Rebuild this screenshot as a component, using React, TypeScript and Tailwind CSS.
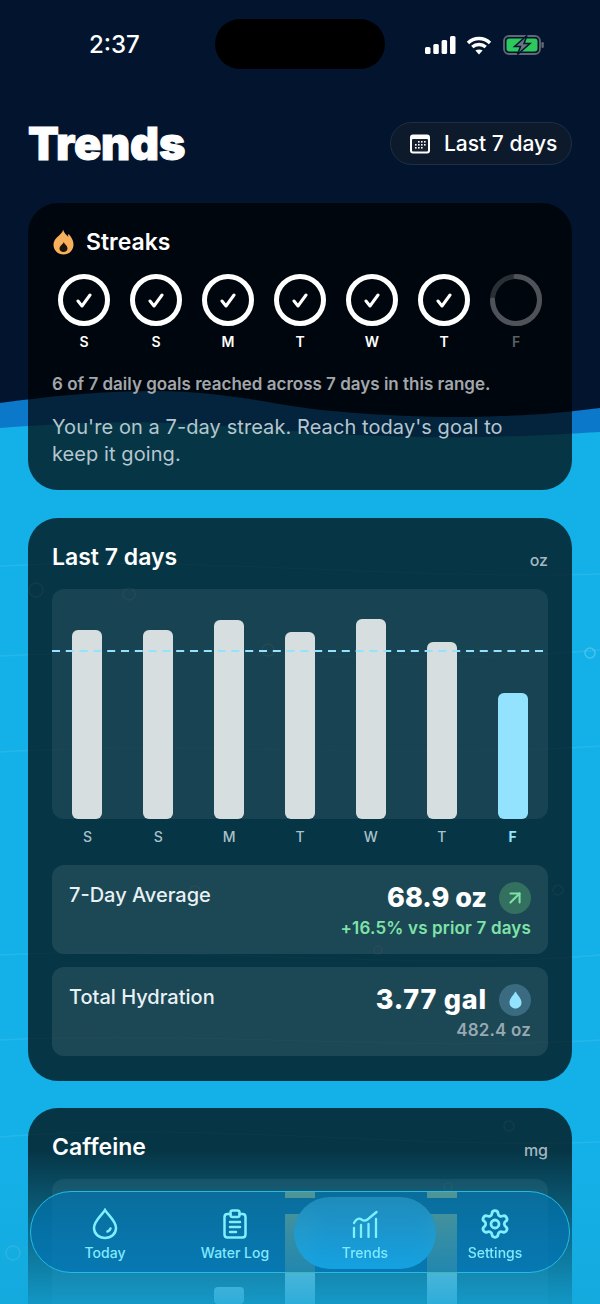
import { Settings, ArrowUpRight } from "lucide-react";

const days = ["S", "S", "M", "T", "W", "T", "F"];
const barHeights = [189, 189, 199, 187, 200, 177, 126];

const Background = () => (
  <svg
    className="absolute inset-0 h-full w-full"
    viewBox="0 0 600 1304"
    preserveAspectRatio="none"
  >
    <rect width="600" height="1304" fill="#03152e" />
    <path
      d="M0 403 C40 398 80 392 150 391 C230 390 280 408 344 412 C400 417 460 418 500 416 C540 415 570 412 600 408 V1304 H0 Z"
      fill="#0b78c9"
    />
    <path
      d="M0 428 C60 424 120 420 190 424 C260 428 340 436 420 437 C490 438 550 435 600 432 V1304 H0 Z"
      fill="#14b1e8"
    />
    <g fill="none" stroke="#ffffff" strokeOpacity="0.08" strokeWidth="1.5">
      <path d="M0 566 C200 556 400 580 600 574" />
      <path d="M0 656 C200 646 400 668 600 650" />
      <path d="M0 752 C200 740 400 760 600 746" />
      <path d="M0 955 C200 945 400 972 600 955" />
      <path d="M0 1040 C200 1030 400 1052 600 1040" />
      <path d="M0 1137 C200 1120 400 1150 600 1142" />
    </g>
    <g fill="none" stroke="#ffffff" strokeOpacity="0.22" strokeWidth="1.5">
      <circle cx="36" cy="590" r="7" />
      <circle cx="129" cy="594" r="6" />
      <circle cx="268" cy="650" r="6" />
      <circle cx="590" cy="653" r="5" />
      <circle cx="195" cy="891" r="5" />
      <circle cx="558" cy="890" r="5" />
      <circle cx="378" cy="950" r="4" />
      <circle cx="509" cy="1126" r="5" />
      <circle cx="448" cy="1187" r="4" />
      <circle cx="13" cy="1253" r="7" />
    </g>
  </svg>
);

const StatusBar = () => (
  <div className="relative flex h-[122px] items-start justify-between text-white">
    <span className="mt-[30px] ml-[89px] text-[24px] leading-[30px] font-medium">2:37</span>
    <div className="absolute top-[19px] left-[215px] h-[50px] w-[170px] rounded-full bg-black" />
    <div className="mt-[35px] mr-[56px] flex items-center gap-[10px]">
      <svg width="31" height="18" viewBox="0 0 31 18" fill="#ffffff">
        <rect x="0" y="11" width="5.5" height="7" rx="1.5" />
        <rect x="8.3" y="8" width="5.5" height="10" rx="1.5" />
        <rect x="16.6" y="4" width="5.5" height="14" rx="1.5" />
        <rect x="25" y="0" width="5.5" height="18" rx="1.5" />
      </svg>
      <svg width="26" height="19" viewBox="0 0 26 19" fill="none" stroke="#ffffff" strokeWidth="3.4">
        <path d="M2 7 C8 1 18 1 24 7" />
        <path d="M6.3 11 C10 7.6 16 7.6 19.7 11" />
        <path d="M13 18.4 L9.4 14.6 C11.4 13 14.6 13 16.6 14.6 Z" fill="#ffffff" stroke="none" />
      </svg>
      <svg className="ml-[1px]" width="41" height="20" viewBox="0 0 41 20">
        <rect x="1" y="1" width="36" height="18" rx="5" fill="none" stroke="#5f6872" strokeWidth="1.8" />
        <rect x="3.5" y="3.5" width="31" height="13" rx="3" fill="#2ec95c" />
        <rect x="38.4" y="7" width="2.4" height="6" rx="1.2" fill="#5f6872" />
        <path d="M24 0.5 L11.5 11.5 H17.5 L14.5 19.5 L27 8.5 H21 Z" fill="#6b7580" stroke="#03152e" strokeWidth="1.5" />
      </svg>
    </div>
  </div>
);

const Header = () => (
  <div className="mb-[38px] flex h-[43px] items-center justify-between px-[28px]">
    <h1 className="text-[45px] leading-none font-black tracking-[-0.005em] text-white [-webkit-text-stroke:1px_#ffffff]">
      Trends
    </h1>
    <div className="flex h-[43px] w-[182px] items-center gap-[14px] rounded-full border border-[#1d2f47] bg-[#0d1a2b] pl-[19px] text-white">
      <svg width="20" height="20" viewBox="0 0 20 20">
        <rect width="20" height="19" y="0.5" rx="3" fill="#ffffff" />
        <rect x="2" y="5" width="16" height="12.5" rx="1" fill="#17202e" />
        <g fill="#ffffff">
          <rect x="8" y="7" width="1.6" height="1.6" />
          <rect x="11" y="7" width="1.6" height="1.6" />
          <rect x="14" y="7" width="1.6" height="1.6" />
          <rect x="5" y="10" width="1.6" height="1.6" />
          <rect x="8" y="10" width="1.6" height="1.6" />
          <rect x="11" y="10" width="1.6" height="1.6" />
          <rect x="14" y="10" width="1.6" height="1.6" />
          <rect x="5" y="13" width="1.6" height="1.6" />
          <rect x="8" y="13" width="1.6" height="1.6" />
          <rect x="11" y="13" width="1.6" height="1.6" />
        </g>
      </svg>
      <span className="text-[21px] leading-none font-medium">Last 7 days</span>
    </div>
  </div>
);

const Flame = () => (
  <svg width="21" height="26" viewBox="0 0 21 26">
    <path
      d="M10 0.5 C11 4 13 5.5 15.5 8 C14.8 6.5 15 5.5 15.5 5 C18.5 8 20.5 11.5 20.5 15.5 C20.5 21.5 16 25.5 10.5 25.5 C5 25.5 0.5 21.5 0.5 15.8 C0.5 10 6 7 7.5 5 C8.8 3.5 10 2.5 10 0.5 Z"
      fill="#f7b15c"
    />
    <path
      d="M10.8 13 C11.5 15.5 14.5 16.5 14.5 19.5 C14.5 21.6 12.8 23 10.5 23 C8.2 23 6.5 21.6 6.5 19.7 C6.5 16.8 9.8 15.8 10.8 13 Z"
      fill="#1c1408"
    />
  </svg>
);

const StreakDay = ({ label, done }: { label: string; done: boolean }) => (
  <div className="flex w-[52px] flex-col items-center gap-[7px]">
    {done ? (
      <div className="flex h-[52px] w-[52px] items-center justify-center rounded-full border-[5px] border-white">
        <svg width="16" height="15" viewBox="0 0 16 15" fill="none" stroke="#ffffff" strokeWidth="3" strokeLinecap="round" strokeLinejoin="round">
          <path d="M2 8 L6 13 L14 2" />
        </svg>
      </div>
    ) : (
      <svg width="52" height="52" viewBox="0 0 52 52" fill="none" strokeWidth="5">
        <circle cx="26" cy="26" r="23.5" stroke="#2a2e35" />
        <path d="M26 2.5 A23.5 23.5 0 1 1 2.5 26" stroke="#4f5359" strokeLinecap="round" />
      </svg>
    )}
    <span className={`text-[14px] leading-[17px] font-semibold ${done ? "text-white" : "text-[#5c6064]"}`}>
      {label}
    </span>
  </div>
);

const StreaksCard = () => (
  <section className="rounded-[30px] bg-black/70 px-[24px] pt-[24px] pb-[22px]">
    <div className="flex h-[30px] items-center gap-[12px] pl-px">
      <Flame />
      <h2 className="text-[23px] leading-none font-semibold text-white">Streaks</h2>
    </div>
    <div className="mt-[17px] flex justify-between px-[6px]">
      {days.map((d, i) => (
        <StreakDay key={i} label={d} done={i < 6} />
      ))}
    </div>
    <p className="mt-[24px] text-[17px] leading-[20px] font-semibold text-[#a3a7ab]">
      6 of 7 daily goals reached across 7 days in this range.
    </p>
    <p className="mt-[20px] text-[20px] leading-[27px] tracking-[0.004em] text-[#b4c6ce]">
      You're on a 7-day streak. Reach today's goal to keep it going.
    </p>
  </section>
);

const CardTitle = ({ title, unit }: { title: string; unit: string }) => (
  <div className="flex h-[32px] items-center justify-between">
    <h2 className="text-[23px] leading-none font-semibold text-white">{title}</h2>
    <span className="mt-[5px] text-[16px] leading-none font-medium text-[#a5b8c0]">{unit}</span>
  </div>
);

const StatBox = ({
  label,
  value,
  valueClass,
  sub,
  subClass,
  badgeClass,
  badge,
}: {
  label: string;
  value: string;
  valueClass: string;
  sub: string;
  subClass: string;
  badgeClass: string;
  badge: React.ReactNode;
}) => (
  <div className="flex h-[89px] justify-between rounded-xl bg-white/[0.09] px-[17px] pt-[17px]">
    <span className="mt-px text-[20px] leading-[24px] font-medium text-[#e8f1f4]">{label}</span>
    <div className="flex flex-col items-end">
      <div className="flex items-center gap-[12px]">
        <span className={`text-[27px] leading-[32px] font-extrabold text-white ${valueClass}`}>{value}</span>
        <div className={`flex h-[32px] w-[32px] items-center justify-center rounded-full ${badgeClass}`}>
          {badge}
        </div>
      </div>
      <span className={`mt-[3px] text-[17px] leading-[22px] font-semibold tracking-[0.01em] ${subClass}`}>{sub}</span>
    </div>
  </div>
);

const Last7Card = () => (
  <section className="mt-[28px] rounded-[30px] bg-black/70 px-[24px] pt-[23px] pb-[25px]">
    <CardTitle title="Last 7 days" unit="oz" />
    <div className="relative mt-[16px] grid h-[230px] grid-cols-7 items-end rounded-xl bg-white/[0.07]">
      {barHeights.map((h, i) => (
        <div key={i} className="flex justify-center">
          <div
            className={`w-[30px] rounded-[6px] ${i === 6 ? "bg-[#93e3ff]" : "bg-[#d6dee0]"}`}
            style={{ height: h }}
          />
        </div>
      ))}
      <svg className="absolute top-[61px] left-0" width="496" height="2">
        <line x1="0" y1="1" x2="496" y2="1" stroke="#93e3ff" strokeWidth="2" strokeDasharray="8 5.8" />
      </svg>
    </div>
    <div className="mt-[9px] grid grid-cols-7 text-center text-[14px] leading-[18px] font-medium text-[#a9c1ca]">
      {days.map((d, i) => (
        <span key={i} className={i === 6 ? "font-bold text-[#93e3ff]" : ""}>
          {d}
        </span>
      ))}
    </div>
    <div className="mt-[19px] flex flex-col gap-[13px]">
      <StatBox
        label="7-Day Average"
        value="68.9 oz"
        valueClass=""
        sub="+16.5% vs prior 7 days"
        subClass="text-[#7fe3a8]"
        badgeClass="bg-[#34705f]"
        badge={<ArrowUpRight size={22} strokeWidth={2.2} color="#7fe3a8" />}
      />
      <StatBox
        label="Total Hydration"
        value="3.77 gal"
        valueClass="tracking-[0.8px]"
        sub="482.4 oz"
        subClass="text-[#98a9b1]"
        badgeClass="bg-[#3a6b80]"
        badge={
          <svg width="13" height="18" viewBox="0 0 13 18">
            <path d="M6.5 0.5 C8.5 4 12.5 7.5 12.5 11.5 C12.5 15 9.8 17.5 6.5 17.5 C3.2 17.5 0.5 15 0.5 11.5 C0.5 7.5 4.5 4 6.5 0.5 Z" fill="#93e3ff" />
          </svg>
        }
      />
    </div>
  </section>
);

const CaffeineCard = () => (
  <section className="mt-[27px] rounded-[30px] bg-black/70 px-[24px] pt-[23px] pb-[25px]">
    <CardTitle title="Caffeine" unit="mg" />
    <div className="mt-[16px] grid h-[230px] grid-cols-7 items-start rounded-xl bg-white/[0.07]">
      {days.map((_, i) => (
        <div key={i} className="flex justify-center">
          {i === 2 && <div className="mt-[108px] h-[17px] w-[30px] rounded-[4px] bg-[#b8cdd0]" />}
          {(i === 3 || i === 5) && (
            <div className="mt-[13px] w-[30px]">
              <div className="h-[6px] bg-[#ffc53a]" />
              <div className="mt-[16px] h-[60px] bg-[#ffc53a]" />
              <div className="h-[60px] bg-[#b8cdd0]" />
            </div>
          )}
        </div>
      ))}
    </div>
  </section>
);

const DropIcon = () => (
  <svg width="26" height="32" viewBox="0 0 26 32" fill="none" stroke="#7ff0ff" strokeWidth="2.5" strokeLinecap="round">
    <path d="M13 2 C15.5 6.5 24 12.5 24 20 C24 26 19 30 13 30 C7 30 2 26 2 20 C2 12.5 10.5 6.5 13 2 Z" />
    <path d="M15.5 23.5 C17 23 18 22 18.5 20.5" />
  </svg>
);

const ClipboardIcon = () => (
  <svg width="24" height="30" viewBox="0 0 24 30" fill="none" stroke="#7ff0ff" strokeWidth="2.5" strokeLinecap="round" strokeLinejoin="round">
    <path d="M7.5 5 H4.5 C2.8 5 1.5 6.3 1.5 8 V25.5 C1.5 27.2 2.8 28.5 4.5 28.5 H19.5 C21.2 28.5 22.5 27.2 22.5 25.5 V8 C22.5 6.3 21.2 5 19.5 5 H16.5" />
    <rect x="7.5" y="1.5" width="9" height="6.5" rx="2" />
    <path d="M7 13 H17 M7 18 H17 M7 23 H13" />
  </svg>
);

const TrendsIcon = () => (
  <svg width="26" height="28" viewBox="0 0 26 28" fill="none" stroke="#7ff0ff" strokeWidth="2.3" strokeLinecap="round" strokeLinejoin="round">
    <path d="M2 13 C4 9 7 7.5 9.5 9.5 C11 10.5 13 11.5 15.5 9.5 L24.5 2" />
    <path d="M2 18 V27 M9 15 V27 M16.5 14 V27 M24 9 V27" />
  </svg>
);

const tabs = [
  { label: "Today", icon: <DropIcon /> },
  { label: "Water Log", icon: <ClipboardIcon /> },
  { label: "Trends", icon: <TrendsIcon /> },
  { label: "Settings", icon: <Settings size={32} strokeWidth={2.1} color="#7ff0ff" /> },
];

const TabBar = () => (
  <nav className="absolute top-[1191px] left-[30px] flex h-[82px] w-[540px] rounded-full border border-[#22bce4] bg-linear-to-b from-[#007ab8]/60 to-[#0070b4]/65 px-[9px]">
    {tabs.map((t, i) => (
      <div key={t.label} className="relative flex flex-1 flex-col items-center pt-[16px]">
        {i === 2 && (
          <div className="absolute top-[5px] -right-[6px] -left-[6px] h-[72px] rounded-full bg-linear-to-b from-[#2391bf]/85 to-[#16a6e6]/90 backdrop-blur-sm" />
        )}
        <div className="relative flex h-[32px] items-center">{t.icon}</div>
        <span className="relative mt-[4px] text-[14px] leading-[18px] font-medium text-[#7feaff]">{t.label}</span>
      </div>
    ))}
  </nav>
);

export default function App() {
  return (
    <div className="relative h-[1304px] w-[600px] overflow-hidden [font-family:Inter,sans-serif]">
      <Background />
      <div className="relative">
        <StatusBar />
        <Header />
        <div className="px-[28px]">
          <StreaksCard />
          <Last7Card />
          <CaffeineCard />
        </div>
      </div>
      {/* bottom fade under the tab bar */}
      <div className="absolute top-[1150px] right-0 bottom-0 left-0 bg-linear-to-b from-[#14a8dc]/0 to-[#14a8dc]/85" />
      <TabBar />
    </div>
  );
}
